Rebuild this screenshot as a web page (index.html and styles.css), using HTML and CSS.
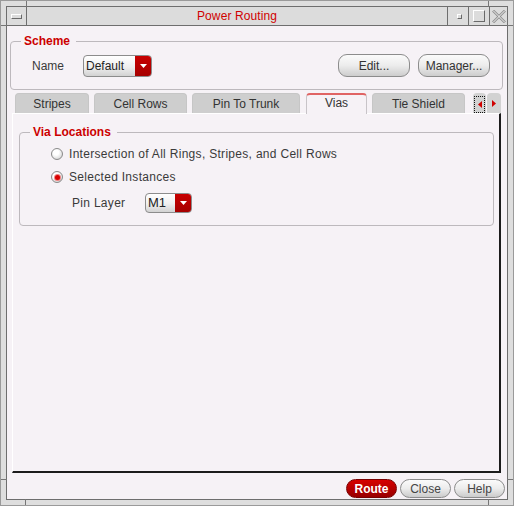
FILE: index.html
```html
<!DOCTYPE html>
<html>
<head>
<meta charset="utf-8">
<link rel="stylesheet" href="styles.css">
</head>
<body>
<div class="window">
  <span class="tick tick-t1"></span>
  <span class="tick tick-t2"></span>
  <span class="tick tick-h tick-l1"></span>
  <span class="tick tick-h tick-r1"></span>
  <span class="tick tick-h tick-l2"></span>
  <span class="tick tick-h tick-r2"></span>
  <span class="tick tick-b1"></span>
  <span class="tick tick-b2"></span>
  <div class="frame">
    <div class="titlebar">
      <div class="tb-btn tb-menu"><span class="menu-bar"></span></div>
      <div class="title">Power Routing</div>
      <div class="tb-btn tb-min"><span class="min-box"></span></div>
      <div class="tb-btn tb-max"><span class="max-box"></span></div>
      <div class="tb-btn tb-close">
        <svg width="14" height="13" viewBox="0 0 14 13">
          <path d="M1 0.5 L13 12.5 M13 0.5 L1 12.5" stroke="#8e8e8e" stroke-width="2.6" fill="none"/>
          <path d="M1 0.5 L13 12.5 M13 0.5 L1 12.5" stroke="#f4f4f4" stroke-width="1" fill="none"/>
        </svg>
      </div>
    </div>
    <div class="client">
      <fieldset class="group scheme">
        <legend>Scheme</legend>
        <div class="scheme-row">
          <span class="label name-label">Name</span>
          <div class="combo combo-default">
            <span class="combo-text">Default</span>
            <span class="combo-arrow"><svg width="7" height="4" viewBox="0 0 7 4"><path d="M0 0 H7 L3.5 4 Z" fill="#fff"/></svg></span>
          </div>
          <button class="pill pill-edit">Edit...</button>
          <button class="pill">Manager...</button>
        </div>
      </fieldset>

      <div class="tabs">
        <div class="tab tab-stripes">Stripes</div>
        <div class="tab tab-cellrows">Cell Rows</div>
        <div class="tab tab-pin">Pin To Trunk</div>
        <div class="tab tab-vias active">Vias</div>
        <div class="tab tab-tie">Tie Shield</div>
        <div class="tab-arrows">
          <div class="tab-arrow arrow-left">
            <span class="focus-ring">
              <svg width="4" height="7" viewBox="0 0 4 7"><path d="M4 0 V7 L0 3.5 Z" fill="#d00000"/></svg>
            </span>
          </div>
          <div class="tab-arrow arrow-right">
            <svg width="4" height="7" viewBox="0 0 4 7"><path d="M0 0 V7 L4 3.5 Z" fill="#d00000"/></svg>
          </div>
        </div>
      </div>

      <div class="panel">
        <fieldset class="group via">
          <legend>Via Locations</legend>
          <div class="via-body">
            <div class="radio-row">
              <span class="radio"></span>
              <span class="label wide">Intersection of All Rings, Stripes, and Cell Rows</span>
            </div>
            <div class="radio-row row-2">
              <span class="radio checked"></span>
              <span class="label wide">Selected Instances</span>
            </div>
            <div class="pin-row">
              <span class="label wide pin-label">Pin Layer</span>
              <div class="combo combo-m1">
                <span class="combo-text">M1</span>
                <span class="combo-arrow"><svg width="7" height="4" viewBox="0 0 7 4"><path d="M0 0 H7 L3.5 4 Z" fill="#fff"/></svg></span>
              </div>
            </div>
          </div>
        </fieldset>
      </div>

      <div class="footer">
        <button class="dlg-btn route">Route</button>
        <button class="dlg-btn">Close</button>
        <button class="dlg-btn">Help</button>
      </div>
    </div>
  </div>
</div>
</body>
</html>
```

FILE: styles.css
```css
* {
  box-sizing: border-box;
}

html,
body {
  margin: 0;
  padding: 0;
}

body {
  width: 514px;
  height: 506px;
  overflow: hidden;
  font-family: "Liberation Sans", Arial, sans-serif;
  font-size: 12px;
  color: #333;
  background: #dedede;
}

.window {
  position: relative;
  width: 514px;
  height: 506px;
  padding: 5px;
  background: #dedede;
  border: 1px solid #9a9a9a;
}

.tick {
  position: absolute;
  background: #767676;
  width: 1px;
  height: 6px;
}

.tick-h {
  width: 6px;
  height: 1px;
}

.tick-t1 { left: 25px; top: 0; }
.tick-t2 { left: 487px; top: 0; }
.tick-l1 { left: 0; top: 24px; }
.tick-r1 { right: 0; top: 24px; }
.tick-l2 { left: 0; top: 478px; }
.tick-r2 { right: 0; top: 478px; }
.tick-b1 { left: 24px; bottom: 0; }
.tick-b2 { left: 487px; bottom: 0; }

.frame {
  width: 502px;
  height: 494px;
  border: 1px solid #6e6e6e;
  display: flex;
  flex-direction: column;
}

/* Title bar */
.titlebar {
  height: 19px;
  flex: none;
  display: flex;
  background: #dcdcdc;
  border-bottom: 1px solid #6e6e6e;
}

.tb-btn {
  display: flex;
  align-items: center;
  justify-content: center;
}

.tb-menu {
  width: 20px;
  border-right: 1px solid #6e6e6e;
}

.menu-bar {
  width: 11px;
  height: 5px;
  background: #dcdcdc;
  border-top: 1px solid #ffffff;
  border-left: 1px solid #ffffff;
  border-bottom: 1px solid #6a6a6a;
  border-right: 1px solid #6a6a6a;
}

.title {
  flex: 1;
  text-align: center;
  line-height: 18px;
  color: #d00000;
  font-size: 12px;
  letter-spacing: 0.1px;
}

.tb-min {
  width: 21px;
  border-left: 1px solid #6e6e6e;
  padding-left: 2px;
}

.min-box {
  width: 5px;
  height: 5px;
  border-top: 1px solid #ffffff;
  border-left: 1px solid #ffffff;
  border-bottom: 1px solid #6a6a6a;
  border-right: 1px solid #6a6a6a;
}

.tb-max {
  width: 21px;
  border-left: 1px solid #6e6e6e;
}

.max-box {
  width: 12px;
  height: 12px;
  border-top: 1px solid #ffffff;
  border-left: 1px solid #ffffff;
  border-bottom: 1px solid #6a6a6a;
  border-right: 1px solid #6a6a6a;
}

.tb-close {
  width: 18px;
  border-left: 1px solid #6e6e6e;
}

/* Client */
.client {
  flex: 1;
  display: flex;
  flex-direction: column;
  background: #f6f2f6;
}

.group {
  margin: 0;
  padding: 0;
  min-width: 0;
  border: 1px solid #bdb9bd;
  border-radius: 4px;
}

.group legend {
  margin-left: 10px;
  padding: 0 6px 0 3px;
  font-weight: bold;
  font-size: 12px;
  line-height: 14px;
  color: #cc0000;
}

.scheme {
  margin: 8px 4px 0 3px;
}

.scheme-row {
  display: flex;
  align-items: center;
  height: 23px;
  margin: 6px 12px 12px 21px;
}

.label {
  color: #3a3a3a;
  white-space: nowrap;
}

.label.wide {
  letter-spacing: 0.3px;
}

.name-label {
  width: 51px;
}

.combo {
  display: flex;
  border: 1px solid #8c8c8c;
  border-radius: 4px;
  overflow: hidden;
  background: linear-gradient(#ffffff, #efefef 55%, #d2d2d2);
}

.combo-text {
  flex: 1;
  padding-left: 2px;
  color: #222;
}

.combo-arrow {
  width: 16px;
  display: flex;
  align-items: center;
  justify-content: center;
  background: linear-gradient(#c80000, #a60000);
}

.combo-default {
  width: 69px;
  height: 22px;
  margin-top: 1px;
}

.combo-default .combo-text {
  line-height: 20px;
}

.pill {
  font-family: inherit;
  font-size: 12px;
  color: #333;
  width: 72px;
  height: 23px;
  padding: 0;
  border: 1px solid #8c8c8c;
  border-radius: 9px;
  background: linear-gradient(#fbfbfb, #ececec 50%, #cdcdcd);
}

.pill-edit {
  margin-left: auto;
  margin-right: 8px;
}

/* Tabs */
.tabs {
  display: flex;
  align-items: flex-end;
  height: 20px;
  flex: none;
  margin: 3px 6px 0 8px;
  position: relative;
  z-index: 1;
}

.tab {
  height: 20px;
  margin-right: 5px;
  padding-top: 1px;
  text-align: center;
  line-height: 19px;
  color: #333;
  background: #cecece;
  border: 1px solid #c6c6c6;
  border-bottom: none;
  border-radius: 4px 4px 0 0;
}

.tab-stripes { width: 74px; }
.tab-cellrows { width: 93px; }
.tab-pin { width: 108px; margin-right: 6px; }
.tab-vias { width: 61px; }
.tab-tie { width: 93px; }

.tab.active {
  height: 21px;
  margin-bottom: -1px;
  padding-top: 0;
  background: #f6f2f6;
  border-color: #c8c4c8;
  border-top: 2px solid #e06464;
  line-height: 17px;
}

.tab-arrows {
  display: flex;
  margin-left: auto;
  gap: 1px;
}

.tab-arrow {
  height: 20px;
  display: flex;
  align-items: center;
  justify-content: center;
  background: #d2d2d2;
  border-radius: 4px 4px 0 0;
}

.arrow-left {
  width: 13px;
}

.arrow-right {
  width: 14px;
}

.focus-ring {
  width: 11px;
  height: 17px;
  margin-top: 3px;
  border: 1px dotted #111;
  display: flex;
  align-items: center;
  justify-content: center;
}

/* Tab panel */
.panel {
  flex: none;
  height: 360px;
  margin: 0 6px 0 5px;
  border-top: 1px solid #ffffff;
  border-left: 1px solid #ffffff;
  border-right: 2px solid #1c1c1c;
  border-bottom: 2px solid #1c1c1c;
  padding-top: 11px;
}

.via {
  margin: 0 5px 0 6px;
}

.via-body {
  padding: 6px 0 12px 31px;
}

.radio-row {
  display: flex;
  align-items: center;
  height: 18px;
}

.row-2 {
  margin-top: 5px;
}

.radio {
  width: 12px;
  height: 12px;
  margin-right: 6px;
  border-radius: 50%;
  border: 1px solid #8a8a8a;
  background: radial-gradient(circle at 40% 35%, #ffffff 30%, #e4e4e4 65%, #c2c2c2);
  display: flex;
  align-items: center;
  justify-content: center;
}

.radio.checked::after {
  content: "";
  width: 5px;
  height: 5px;
  border-radius: 50%;
  background: #d80000;
  box-shadow: 0 0 0 1px #f08080;
}

.pin-row {
  display: flex;
  align-items: center;
  height: 20px;
  margin-top: 7px;
  padding-left: 21px;
}

.pin-label {
  width: 73px;
}

.combo-m1 {
  width: 47px;
  height: 20px;
}

.combo-m1 .combo-text {
  line-height: 18px;
  font-size: 13px;
}

/* Footer */
.footer {
  display: flex;
  justify-content: flex-end;
  gap: 3px;
  padding: 6px 2px 0 0;
}

.dlg-btn {
  font-family: inherit;
  font-size: 12px;
  width: 51px;
  height: 19px;
  padding: 0;
  color: #444;
  border: 1px solid #8c8c8c;
  border-radius: 10px;
  background: linear-gradient(#fbfbfb, #ececec 50%, #cbcbcb);
}

.dlg-btn.route {
  color: #ffffff;
  font-weight: bold;
  border-color: #7a0000;
  background: linear-gradient(#d60000, #b80000 50%, #980000);
}
```
